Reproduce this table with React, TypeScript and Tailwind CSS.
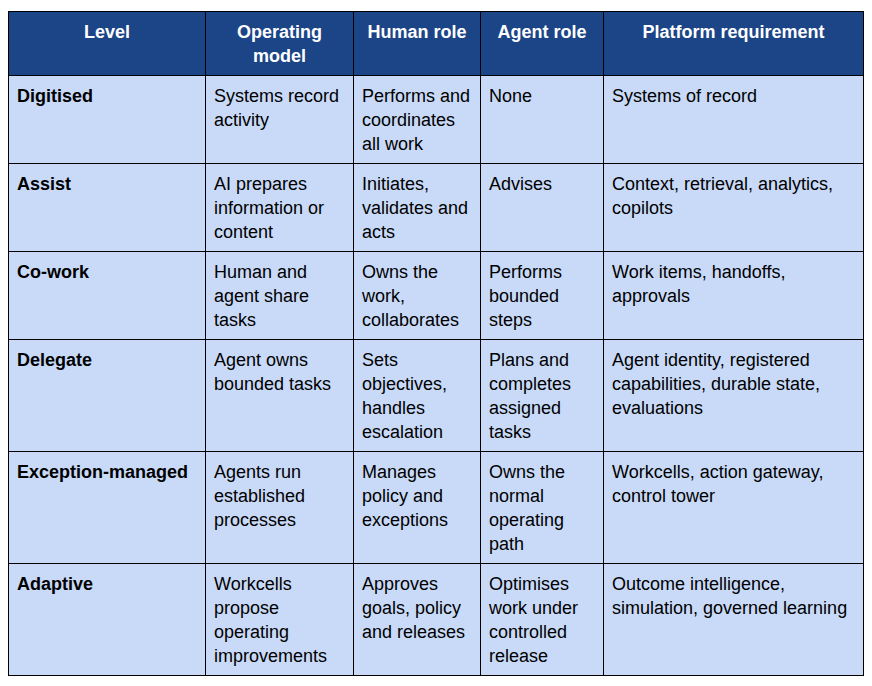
const headers = ['Level', 'Operating model', 'Human role', 'Agent role', 'Platform requirement']

const rows: string[][] = [
  ['Digitised', 'Systems record activity', 'Performs and coordinates all work', 'None', 'Systems of record'],
  ['Assist', 'AI prepares information or content', 'Initiates, validates and acts', 'Advises', 'Context, retrieval, analytics, copilots'],
  ['Co-work', 'Human and agent share tasks', 'Owns the work, collaborates', 'Performs bounded steps', 'Work items, handoffs, approvals'],
  ['Delegate', 'Agent owns bounded tasks', 'Sets objectives, handles escalation', 'Plans and completes assigned tasks', 'Agent identity, registered capabilities, durable state, evaluations'],
  ['Exception-managed', 'Agents run established processes', 'Manages policy and exceptions', 'Owns the normal operating path', 'Workcells, action gateway, control tower'],
  ['Adaptive', 'Workcells propose operating improvements', 'Approves goals, policy and releases', 'Optimises work under controlled release', 'Outcome intelligence, simulation, governed learning'],
]

export default function App() {
  return (
    <div className="min-h-screen bg-white pt-[11px] pl-2 font-['Liberation_Sans',Arial,sans-serif] text-[18px] leading-6 text-black">
      <table className="table-fixed border-collapse w-[855px]">
        <colgroup>
          <col className="w-[197px]" />
          <col className="w-[148px]" />
          <col className="w-[127px]" />
          <col className="w-[123px]" />
          <col className="w-[260px]" />
        </colgroup>
        <thead>
          <tr>
            {headers.map((h) => (
              <th key={h} className="border border-black bg-[#1c4587] px-2 pt-2 pb-[7px] align-top text-center font-bold text-white">
                {h}
              </th>
            ))}
          </tr>
        </thead>
        <tbody>
          {rows.map((r) => (
            <tr key={r[0]}>
              {r.map((c, i) => (
                <td key={i} className={`border border-black bg-[#c9daf8] px-2 pt-2 pb-[7px] align-top ${i === 0 ? 'font-bold' : ''}`}>
                  {c}
                </td>
              ))}
            </tr>
          ))}
        </tbody>
      </table>
    </div>
  )
}
